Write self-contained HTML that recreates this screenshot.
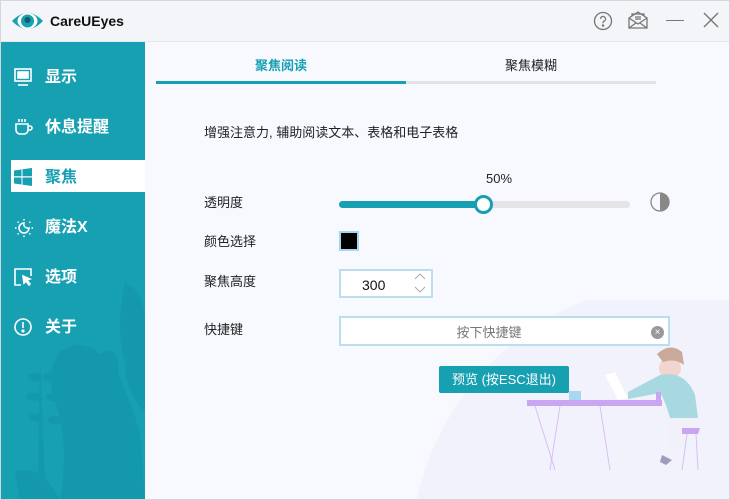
<!DOCTYPE html>
<html><head><meta charset="utf-8"><style>
*{margin:0;padding:0;box-sizing:border-box}
html{width:730px;height:500px;overflow:hidden}
body{width:730px;height:500px;overflow:hidden;position:relative;background:#f7f9fe;font-family:"Liberation Sans","Noto Sans CJK SC",sans-serif;font-size:13px;color:#222}
.hdr{position:absolute;left:0;top:0;width:730px;height:42px;background:#f4f5f9;border-bottom:1px solid #e6e7eb}
.side{position:absolute;left:0;top:42px;width:145px;height:458px;background:#179fb2;overflow:hidden}
.item{position:absolute;left:11px;width:134px;height:32px;color:#fff;font-weight:bold;font-size:16px;line-height:32px}
.item span{position:absolute;left:34px;top:2px}
.item svg{position:absolute;left:3px;top:8px}
.sel{background:#fff;color:#179fb2}
.abs{position:absolute}
.frame{position:absolute;left:0;top:0;width:730px;height:500px;border:1px solid #d4d6da;pointer-events:none}
</style></head><body>
<div class="hdr">
<svg class="abs" style="left:11px;top:9px" width="33" height="24" viewBox="0 0 33 24"><path d="M1 12 Q16.5 -4 32 12 Q16.5 28 1 12Z" fill="#179fb2"/><ellipse cx="16.5" cy="12" rx="10" ry="8" fill="#fff"/><circle cx="16.5" cy="12" r="6.5" fill="#179fb2"/><circle cx="16.5" cy="11" r="3" fill="#0d5d6e"/></svg>
<div class="abs" style="left:50px;top:13px;font-weight:bold;font-size:14px;color:#111">CareUEyes</div>
<svg class="abs" style="left:593px;top:11px" width="20" height="20" viewBox="0 0 20 20" fill="none" stroke="#777" stroke-width="1.3"><circle cx="10" cy="10" r="8.5"/><path d="M7.5 8a2.5 2.5 0 1 1 3.3 2.3c-.6.3-.8.7-.8 1.4v.6"/><circle cx="10" cy="14.5" r=".6" fill="#777"/></svg>
<svg class="abs" style="left:628px;top:11px" width="20" height="18" viewBox="0 0 20 18" fill="none" stroke="#777" stroke-width="1.3"><path d="M1 7v10h18V7L10 1 1 7ZM1 7l9 6 9-6M1 17l7-5M19 17l-7-5M4 5V3h12v2M7 6h6M7 8h6"/></svg>
<div class="abs" style="left:666px;top:20px;width:18px;height:1.3px;background:#777"></div>
<svg class="abs" style="left:703px;top:12px" width="16" height="16" viewBox="0 0 16 16" stroke="#777" stroke-width="1.4"><path d="M1 1L15 15M15 1L1 15"/></svg>
</div>
<div class="side">
<svg class="abs" style="left:0;top:240px" width="145" height="218" viewBox="0 0 145 218" fill="#0f8fa5" opacity=".4"><path d="M60 70 Q80 55 100 72 Q120 60 118 90 Q130 120 140 150 L145 218 L60 218 Q70 160 55 120 Q45 90 60 70Z"/><path d="M125 0 Q145 10 145 40 L145 130 Q125 110 125 80 Q115 50 125 0Z"/><path d="M40 80 L45 200 L38 200Z"/><ellipse cx="35" cy="95" rx="7" ry="4"/><ellipse cx="50" cy="95" rx="7" ry="4"/><ellipse cx="33" cy="115" rx="7" ry="4"/><ellipse cx="53" cy="115" rx="7" ry="4"/><ellipse cx="36" cy="135" rx="7" ry="4"/><ellipse cx="55" cy="138" rx="7" ry="4"/><path d="M15 190 Q40 180 60 218 L20 218Z"/></svg>
<div class="item" style="top:18px"><svg width="18" height="18" viewBox="0 0 18 18" fill="none" stroke="#fff" stroke-width="1.6"><rect x="1" y="1" width="16" height="12"/><rect x="4" y="4" width="10" height="6" fill="#fff"/><path d="M4 17h10"/></svg><span>显示</span></div>
<div class="item" style="top:68px"><svg width="20" height="18" viewBox="0 0 20 18" fill="none" stroke="#fff" stroke-width="1.6"><path d="M2 6h12v6a4 4 0 0 1-4 4H6a4 4 0 0 1-4-4V6ZM14 8h2a2 2 0 0 1 0 4h-2M5 1v3M8 1v3M11 1v3"/></svg><span>休息提醒</span></div>
<div class="item sel" style="top:118px;height:32px"><svg width="18" height="18" viewBox="0 0 18 18" fill="#179fb2"><path d="M0 2.5L7.5 1.5V8.3H0ZM8.5 1.3L18 0V8.3H8.5ZM0 9.5H7.5V16.5L0 15.5ZM8.5 9.5H18V18L8.5 16.7Z"/></svg><span>聚焦</span></div>
<div class="item" style="top:168px"><svg width="20" height="20" viewBox="0 0 20 20" fill="none" stroke="#fff" stroke-width="1.5"><path d="M10 5a5 5 0 1 0 5 5 4 4 0 0 1-5-5Z"/><path d="M10 1v1.5M10 17.5V19M1 10h1.5M17.5 10H19M3.6 3.6l1 1M15.4 15.4l1 1M3.6 16.4l1-1M15.4 4.6l1-1"/></svg><span>魔法X</span></div>
<div class="item" style="top:218px"><svg width="18" height="18" viewBox="0 0 18 18" fill="none" stroke="#fff" stroke-width="1.6"><path d="M7 17H1V1h16v7"/><path d="M9 8l7 3-3 1 3 4-1 1-3-4-2 2Z" fill="#fff"/></svg><span>选项</span></div>
<div class="item" style="top:268px"><svg width="18" height="18" viewBox="0 0 18 18" fill="none" stroke="#fff" stroke-width="1.6"><circle cx="9" cy="9" r="8"/><path d="M9 4v6"/><circle cx="9" cy="13" r=".8" fill="#fff"/></svg><span>关于</span></div>
</div>
<svg class="abs" style="left:360px;top:300px" width="370" height="200" viewBox="0 0 370 200"><circle cx="330" cy="260" r="280" fill="#f1f2fc"/>
<rect x="167" y="100" width="135" height="6" fill="#c9a5f2"/><path d="M200 106 L190 170 M240 106 L250 170 M175 106 L195 170" stroke="#d8bff5" stroke-width="1"/>
<rect x="209" y="91" width="12" height="9" fill="#a7d8f0"/><path d="M245 75 L255 72 L268 98 L258 100Z" fill="#fff"/>
<circle cx="310" cy="68" r="11" fill="#f3d5d0"/><path d="M297 54 Q310 42 322 52 L324 65 Q315 58 303 62Z" fill="#c8a99a"/>
<path d="M300 75 Q325 70 335 95 L338 118 L310 118 Q305 100 300 93 L268 99 L268 92 Z" fill="#a8d8e0"/>
<path d="M310 118 L338 118 L320 150 L305 160 Z" fill="#f1f1fa"/><path d="M302 155 L312 160 L306 165 L300 162Z" fill="#a19bc0"/>
<path d="M322 128 L340 128 L338 134 L322 134Z" fill="#c9a5f2"/><path d="M327 134 L322 170 M336 134 L338 170" stroke="#d8bff5"/><rect x="296" y="92" width="5" height="9" fill="#c9a5f2"/></svg>
<div class="abs" style="left:156px;top:55px;width:250px;text-align:center;color:#179fb2;font-weight:bold">聚焦阅读</div>
<div class="abs" style="left:406px;top:55px;width:250px;text-align:center">聚焦模糊</div>
<div class="abs" style="left:156px;top:81px;width:250px;height:3px;background:#179fb2"></div>
<div class="abs" style="left:406px;top:81px;width:250px;height:3px;background:#e3e3e6"></div>
<div class="abs" style="left:204px;top:122px">增强注意力, 辅助阅读文本、表格和电子表格</div>
<div class="abs" style="left:486px;top:171px">50%</div>
<div class="abs" style="left:204px;top:192px">透明度</div>
<div class="abs" style="left:339px;top:201px;width:291px;height:7px;border-radius:4px;background:#e5e5e7"></div>
<div class="abs" style="left:339px;top:201px;width:146px;height:7px;border-radius:4px;background:#179fb2"></div>
<div class="abs" style="left:474px;top:195px;width:19px;height:19px;border-radius:50%;background:#fff;border:3px solid #179fb2"></div>
<svg class="abs" style="left:650px;top:192px" width="20" height="20" viewBox="0 0 20 20"><path d="M10 1a9 9 0 0 1 0 18Z" fill="#888"/><circle cx="10" cy="10" r="9" fill="none" stroke="#888" stroke-width="1.3"/></svg>
<div class="abs" style="left:204px;top:231px">颜色选择</div>
<div class="abs" style="left:339px;top:231px;width:20px;height:20px;background:#000;border:2px solid #a8d6ee"></div>
<div class="abs" style="left:204px;top:271px">聚焦高度</div>
<div class="abs" style="left:339px;top:269px;width:94px;height:29px;background:#fff;border:2px solid #b9def0"></div>
<div class="abs" style="left:362px;top:277px;font-size:14px;color:#111">300</div>
<svg class="abs" style="left:413px;top:271px" width="14" height="24" viewBox="0 0 14 24" fill="none" stroke="#aaa"><path d="M2 8l5-5 5 5M2 16l5 5 5-5"/></svg>
<div class="abs" style="left:204px;top:319px">快捷键</div>
<div class="abs" style="left:339px;top:316px;width:331px;height:30px;background:#fff;border:2px solid #b9def0"></div>
<div class="abs" style="left:339px;top:322px;width:300px;text-align:center;color:#777">按下快捷键</div>
<div class="abs" style="left:651px;top:326px;width:13px;height:13px;border-radius:50%;background:#999;color:#fff;font-size:10px;line-height:13px;text-align:center">×</div>
<div class="abs" style="left:439px;top:366px;width:130px;height:27px;background:#179fb2;border-radius:2px;color:#fff;text-align:center;line-height:27px">预览 (按ESC退出)</div>
<div class="frame"></div>
</body></html>
